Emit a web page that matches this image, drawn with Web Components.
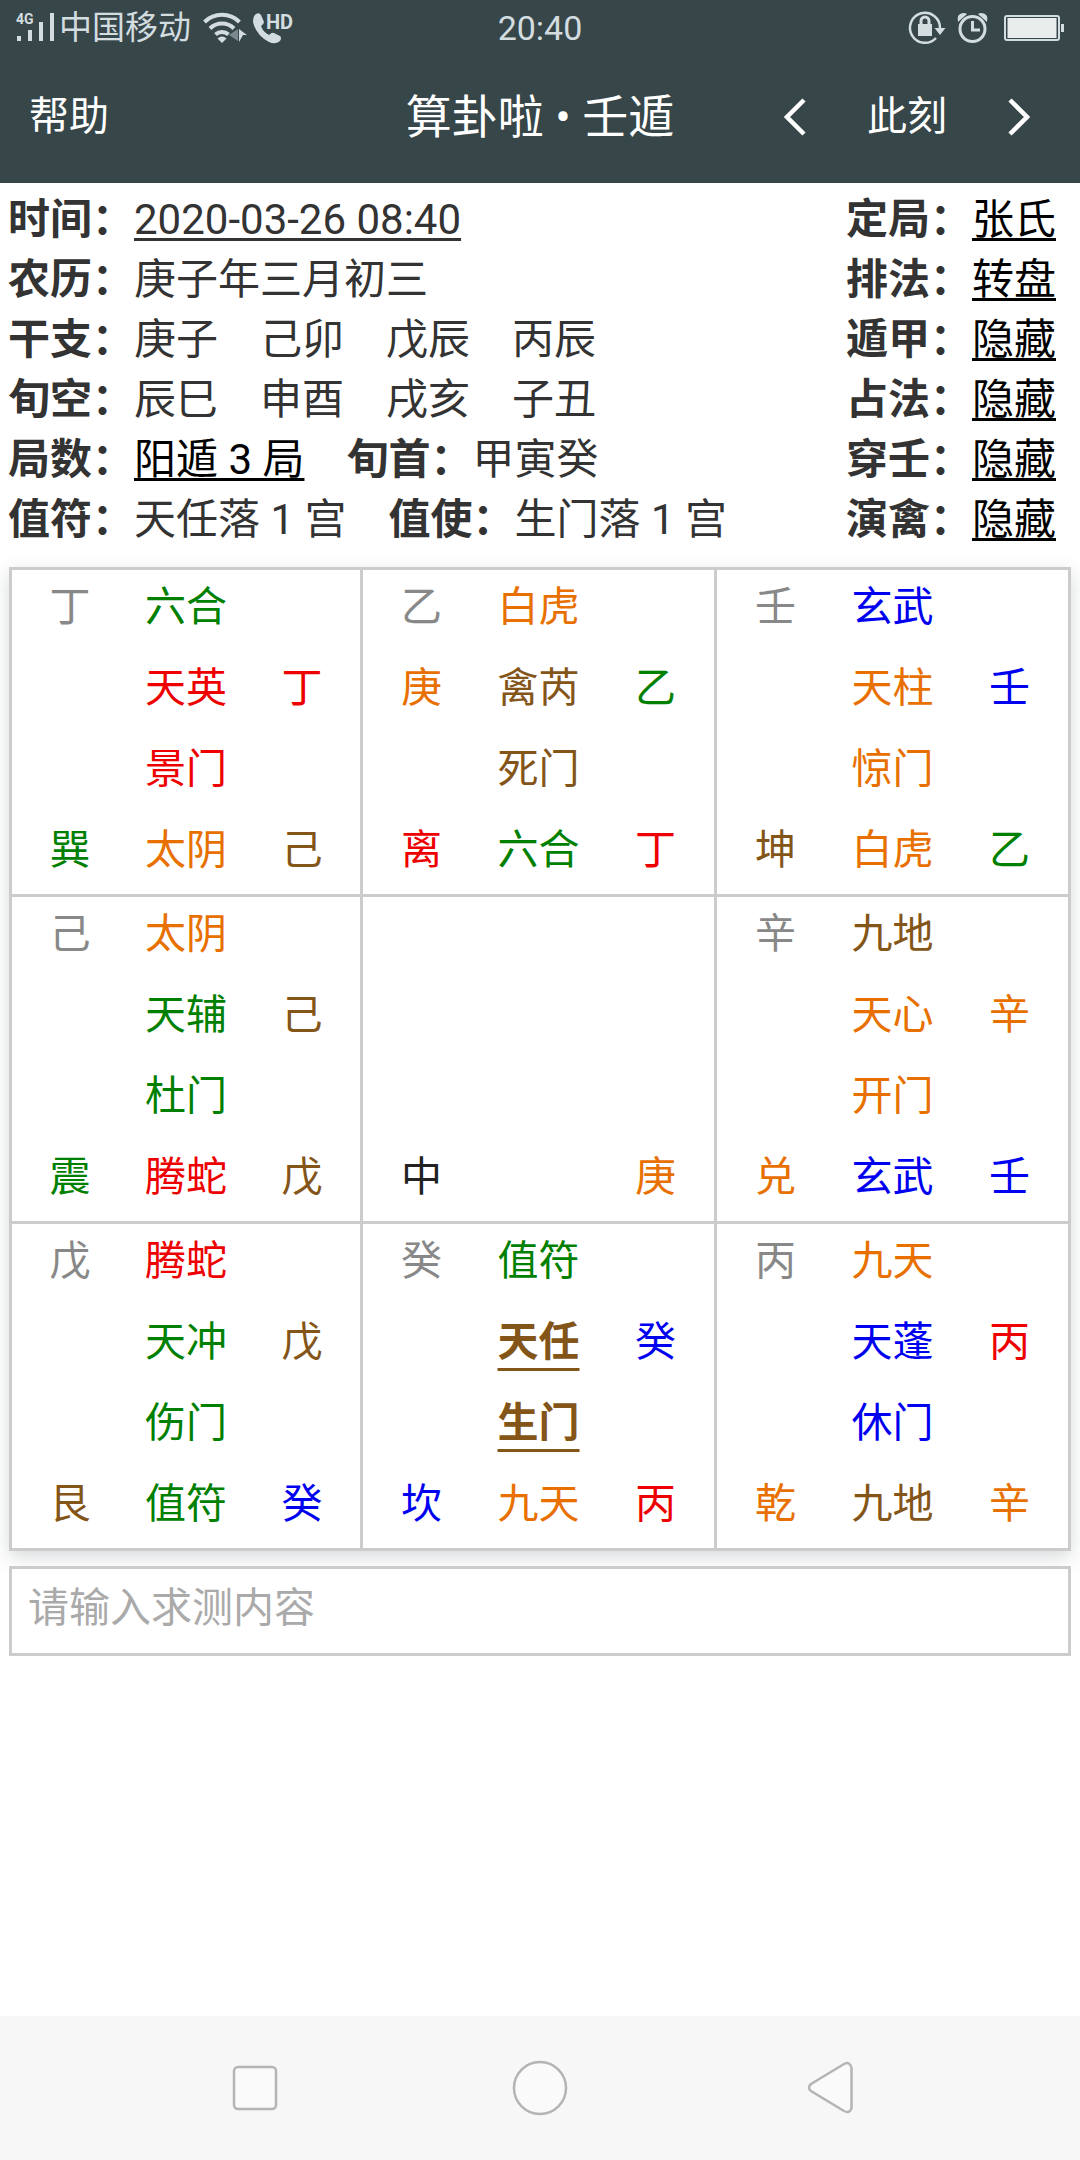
<!DOCTYPE html>
<html lang="zh-CN">
<head>
<meta charset="utf-8">
<meta name="viewport" content="width=device-width">
<title>算卦啦 • 壬遁</title>
<style>
html, body { margin: 0; height: 100%; background: #fff; }
body { font-family: Roboto, "Noto Sans CJK SC", sans-serif; color: #333; }
</style>
</head>
<body>
<dun-app></dun-app>
<script>
function define(name, html, setup) {
  const tpl = document.createElement('template');
  tpl.innerHTML = html;
  customElements.define(name, class extends HTMLElement {
    constructor() {
      super();
      this.attachShadow({ mode: 'open' }).append(tpl.content.cloneNode(true));
    }
    connectedCallback() {
      if (setup && !this.ready) { this.ready = true; setup(this, this.shadowRoot); }
    }
  });
}

/* System status bar */
define('status-bar', `
<style>
:host { display: grid; grid-template-columns: 1fr auto 1fr; align-items: center; height: 56px; padding: 0 16px; color: #d3dde0; }
.side { display: flex; align-items: center; }
.left { gap: 8px; }
.carrier { display: flex; align-items: center; gap: 4px; padding-right: 4px; font-size: 33px; line-height: 56px; }
.right { justify-content: flex-end; gap: 12px; }
.power { margin-left: 4px; }
time { font-size: 34px; line-height: 56px; }
svg { display: block; overflow: visible; }
.signal text { font: bold 14px Roboto, sans-serif; }
.call text { font: bold 20px Roboto, sans-serif; }
</style>
<div class="side left">
  <div class="carrier">
    <svg class="signal" width="39" height="30" viewBox="0 0 39 30" fill="currentColor">
      <text x="0" y="11">4G</text>
      <path d="M1 23h4v5H1zM12 17h4v11h-4zM23 9h4v19h-4zM34 0h4v28h-4z"/>
    </svg>
    <span>中国移动</span>
  </div>
  <svg width="42" height="30" viewBox="0 0 42 30" fill="none" stroke="currentColor" stroke-width="4">
    <path d="M1.500 9a25 25 0 0 1 35 0M7 15.500a17 17 0 0 1 24 0M12.500 21.500a9.500 9.500 0 0 1 13 0"/>
    <path d="M14.500 25.500q4.500-4 9 0l-4.500 4.500z" fill="currentColor" stroke="none"/>
    <path d="M35 16v12l-9-6z" fill="#7b8a8e" stroke="none"/>
    <path d="M36 16l8 6h-4l-4 7z" fill="currentColor" stroke="none"/>
  </svg>
  <svg class="call" width="42" height="30" viewBox="0 0 42 30" fill="currentColor">
    <path d="M3 1q3-2 5 1l3 7q0 2-3 4q2 6 8 9q3-3 5-2l6 3q2 2 0 5q-5 4-11 1Q3 22 0 9Q0 3 3 1z"/>
    <text x="13" y="16">HD</text>
  </svg>
</div>
<time>20:40</time>
<div class="side right">
  <svg width="37" height="34" viewBox="0 0 37 34" fill="none" stroke="currentColor" stroke-width="2.500">
    <path d="M32 17A15 15 0 1 0 28 27"/>
    <path d="M26.500 17h11l-5.500 7z" fill="currentColor" stroke="none"/>
    <path d="M10 13h14v12H10z" fill="currentColor" stroke="none"/>
    <path d="M13 14v-4a4 4 0 0 1 8 0v4" stroke-width="3"/>
  </svg>
  <svg width="31" height="30" viewBox="0 0 31 30" fill="none" stroke="currentColor">
    <circle cx="15.500" cy="16" r="12.500" stroke-width="3"/>
    <path d="M15.500 8v9h7.500" stroke-width="3"/>
    <path d="M1 9Q-1 1 6 0q3 0 4 1zM30 9Q32 1 25 0q-3 0-4 1z" fill="currentColor" stroke="none"/>
  </svg>
  <svg class="power" width="60" height="26" viewBox="0 0 60 26">
    <rect x="1" y="1" width="54" height="24" rx="2" fill="none" stroke="currentColor" stroke-width="2"/>
    <rect x="3.500" y="3" width="49" height="20" fill="#e9edec"/>
    <path d="M57 9h3v8h-3z" fill="currentColor"/>
  </svg>
</div>`);

/* Title bar with help, title and time stepping */
define('title-bar', `
<style>
:host { display: grid; box-sizing: border-box; grid-template-columns: 1fr auto 1fr; align-items: center; height: 127px; padding: 0 29px 6px; color: #fff; }
h1 { margin: 0; font-size: 46px; line-height: 60px; font-weight: 400; }
button { border: 0; padding: 0; background: none; color: inherit; font: inherit; font-size: 40px; line-height: 60px; }
.help { justify-self: start; }
nav { display: flex; justify-content: flex-end; align-items: center; gap: 61px; padding-right: 21px; }
svg { display: block; }
</style>
<button class="help">帮助</button>
<h1>算卦啦 • 壬遁</h1>
<nav>
  <button aria-label="上一时"><svg width="22" height="38" viewBox="0 0 22 38" fill="none" stroke="currentColor" stroke-width="4.500"><path d="M20 2L3 19l17 17"/></svg></button>
  <button>此刻</button>
  <button aria-label="下一时"><svg width="22" height="38" viewBox="0 0 22 38" fill="none" stroke="currentColor" stroke-width="4.500"><path d="M2 2l17 17L2 36"/></svg></button>
</nav>`);

/* One labelled value */
define('info-item', `
<style>
:host { display: flex; white-space: pre; font-size: 42px; line-height: 60px; }
b { font-weight: 700; }
::slotted(a) { color: #000; text-decoration: underline 3px; text-underline-offset: 4px; text-decoration-skip-ink: none; }
::slotted(a.plain) { color: inherit; }
</style>
<b></b><span><slot></slot></span>`, (el, root) => {
  root.querySelector('b').textContent = el.getAttribute('label') + '：';
});

define('info-panel', `
<style>
:host { display: flex; justify-content: space-between; padding: 7px 24px 17px 8px; }
.col { display: flex; flex-direction: column; }
.line { display: flex; gap: 42px; }
</style>
<div class="col">
  <info-item label="时间"><a class="plain" href="#time">2020-03-26 08:40</a></info-item>
  <info-item label="农历">庚子年三月初三</info-item>
  <info-item label="干支">庚子　己卯　戊辰　丙辰</info-item>
  <info-item label="旬空">辰巳　申酉　戌亥　子丑</info-item>
  <div class="line"><info-item label="局数"><a href="#ju">阳遁 3 局</a></info-item><info-item label="旬首">甲寅癸</info-item></div>
  <div class="line"><info-item label="值符">天任落 1 宫</info-item><info-item label="值使">生门落 1 宫</info-item></div>
</div>
<div class="col">
  <info-item label="定局"><a href="#dingju">张氏</a></info-item>
  <info-item label="排法"><a href="#paifa">转盘</a></info-item>
  <info-item label="遁甲"><a href="#dunjia">隐藏</a></info-item>
  <info-item label="占法"><a href="#zhanfa">隐藏</a></info-item>
  <info-item label="穿壬"><a href="#chuanren">隐藏</a></info-item>
  <info-item label="演禽"><a href="#yanqin">隐藏</a></info-item>
</div>`);

/* One palace: 4 rows of 3; each token is text/colour, and a third part marks the leading star or gate */
const COLOURS = { x: '#888', g: '#008000', r: '#ee0000', o: '#e87000', b: '#0000f0', n: '#845518', k: '#222' };
define('palace-cell', `
<style>
:host { display: grid; grid-template-columns: repeat(3, 1fr); grid-auto-rows: 81px; font-size: 41px; line-height: 74px; text-align: center; border: solid #ccc; border-width: 0 3px 3px 0; }
.lead { font-weight: 700; text-decoration: underline 3px; text-underline-offset: 12px; text-decoration-skip-ink: none; }
</style>`, (el, root) => {
  el.getAttribute('cells').split(' ').forEach(token => {
    const cell = document.createElement('span');
    if (token !== '-') {
      const [text, colour, lead] = token.split('/');
      cell.textContent = text;
      cell.style.color = COLOURS[colour];
      if (lead) cell.className = 'lead';
    }
    root.append(cell);
  });
});

define('palace-board', `
<style>
:host { display: grid; grid-template-columns: repeat(3, 1fr); margin: 0 9px; border-top: 3px solid #ccc; background: #fff; box-shadow: 0 6px 18px rgba(55, 71, 75, .2); }
palace-cell:nth-of-type(3n + 1) { border-left-width: 3px; }
</style>
<palace-cell cells="丁/x 六合/g - - 天英/r 丁/r - 景门/r - 巽/g 太阴/o 己/n"></palace-cell>
<palace-cell cells="乙/x 白虎/o - 庚/o 禽芮/n 乙/g - 死门/n - 离/r 六合/g 丁/r"></palace-cell>
<palace-cell cells="壬/x 玄武/b - - 天柱/o 壬/b - 惊门/o - 坤/n 白虎/o 乙/g"></palace-cell>
<palace-cell cells="己/x 太阴/o - - 天辅/g 己/n - 杜门/g - 震/g 腾蛇/r 戊/n"></palace-cell>
<palace-cell cells="- - - - - - - - - 中/k - 庚/o"></palace-cell>
<palace-cell cells="辛/x 九地/n - - 天心/o 辛/o - 开门/o - 兑/o 玄武/b 壬/b"></palace-cell>
<palace-cell cells="戊/x 腾蛇/r - - 天冲/g 戊/n - 伤门/g - 艮/n 值符/g 癸/b"></palace-cell>
<palace-cell cells="癸/x 值符/g - - 天任/n/1 癸/b - 生门/n/1 - 坎/b 九天/o 丙/r"></palace-cell>
<palace-cell cells="丙/x 九天/o - - 天蓬/b 丙/r - 休门/b - 乾/o 九地/n 辛/o"></palace-cell>`);

define('question-box', `
<style>
:host { display: block; margin: 15px 9px 0; position: relative; }
input { display: block; box-sizing: border-box; width: 100%; height: 90px; margin: 0; padding: 0 16px 6px; border: 3px solid #ccc; border-radius: 0; background: #fff; color: #333; font: inherit; font-size: 41px; outline: 0; }
input::placeholder { color: #aaa; opacity: 1; }
</style>
<input type="text" aria-label="求测内容" placeholder="请输入求测内容">`);

/* System navigation keys */
define('system-nav', `
<style>
:host { display: grid; grid-template-columns: repeat(3, 1fr); padding: 0 108px; height: 144px; align-items: center; background: #f7f7f7; }
button { justify-self: center; border: 0; padding: 0; background: none; color: #b4b4b4; }
svg { display: block; }
</style>
<button aria-label="最近任务"><svg width="56" height="56" viewBox="0 0 56 56" fill="#fafafa" stroke="currentColor" stroke-width="2.500"><rect x="10" y="7" width="42" height="42" rx="4"/></svg></button>
<button aria-label="主屏幕"><svg width="56" height="56" viewBox="0 0 56 56" fill="#fafafa" stroke="currentColor" stroke-width="2.500"><circle cx="28" cy="28" r="26"/></svg></button>
<button aria-label="返回"><svg width="56" height="56" viewBox="0 0 56 56" fill="#fafafa" stroke="currentColor" stroke-width="2.500"><path d="M11 24L44 4q6-3 7.500 4v40q-1.500 6-7.500 3L11 31q-4-3.500 0-7z"/></svg></button>`);

define('dun-app', `
<style>
:host { display: flex; flex-direction: column; min-height: 100%; }
header { background: #374649; }
main { flex: 1; }
</style>
<header><status-bar></status-bar><title-bar></title-bar></header>
<main><info-panel></info-panel><palace-board></palace-board><question-box></question-box></main>
<system-nav></system-nav>`);
</script>
</body>
</html>
